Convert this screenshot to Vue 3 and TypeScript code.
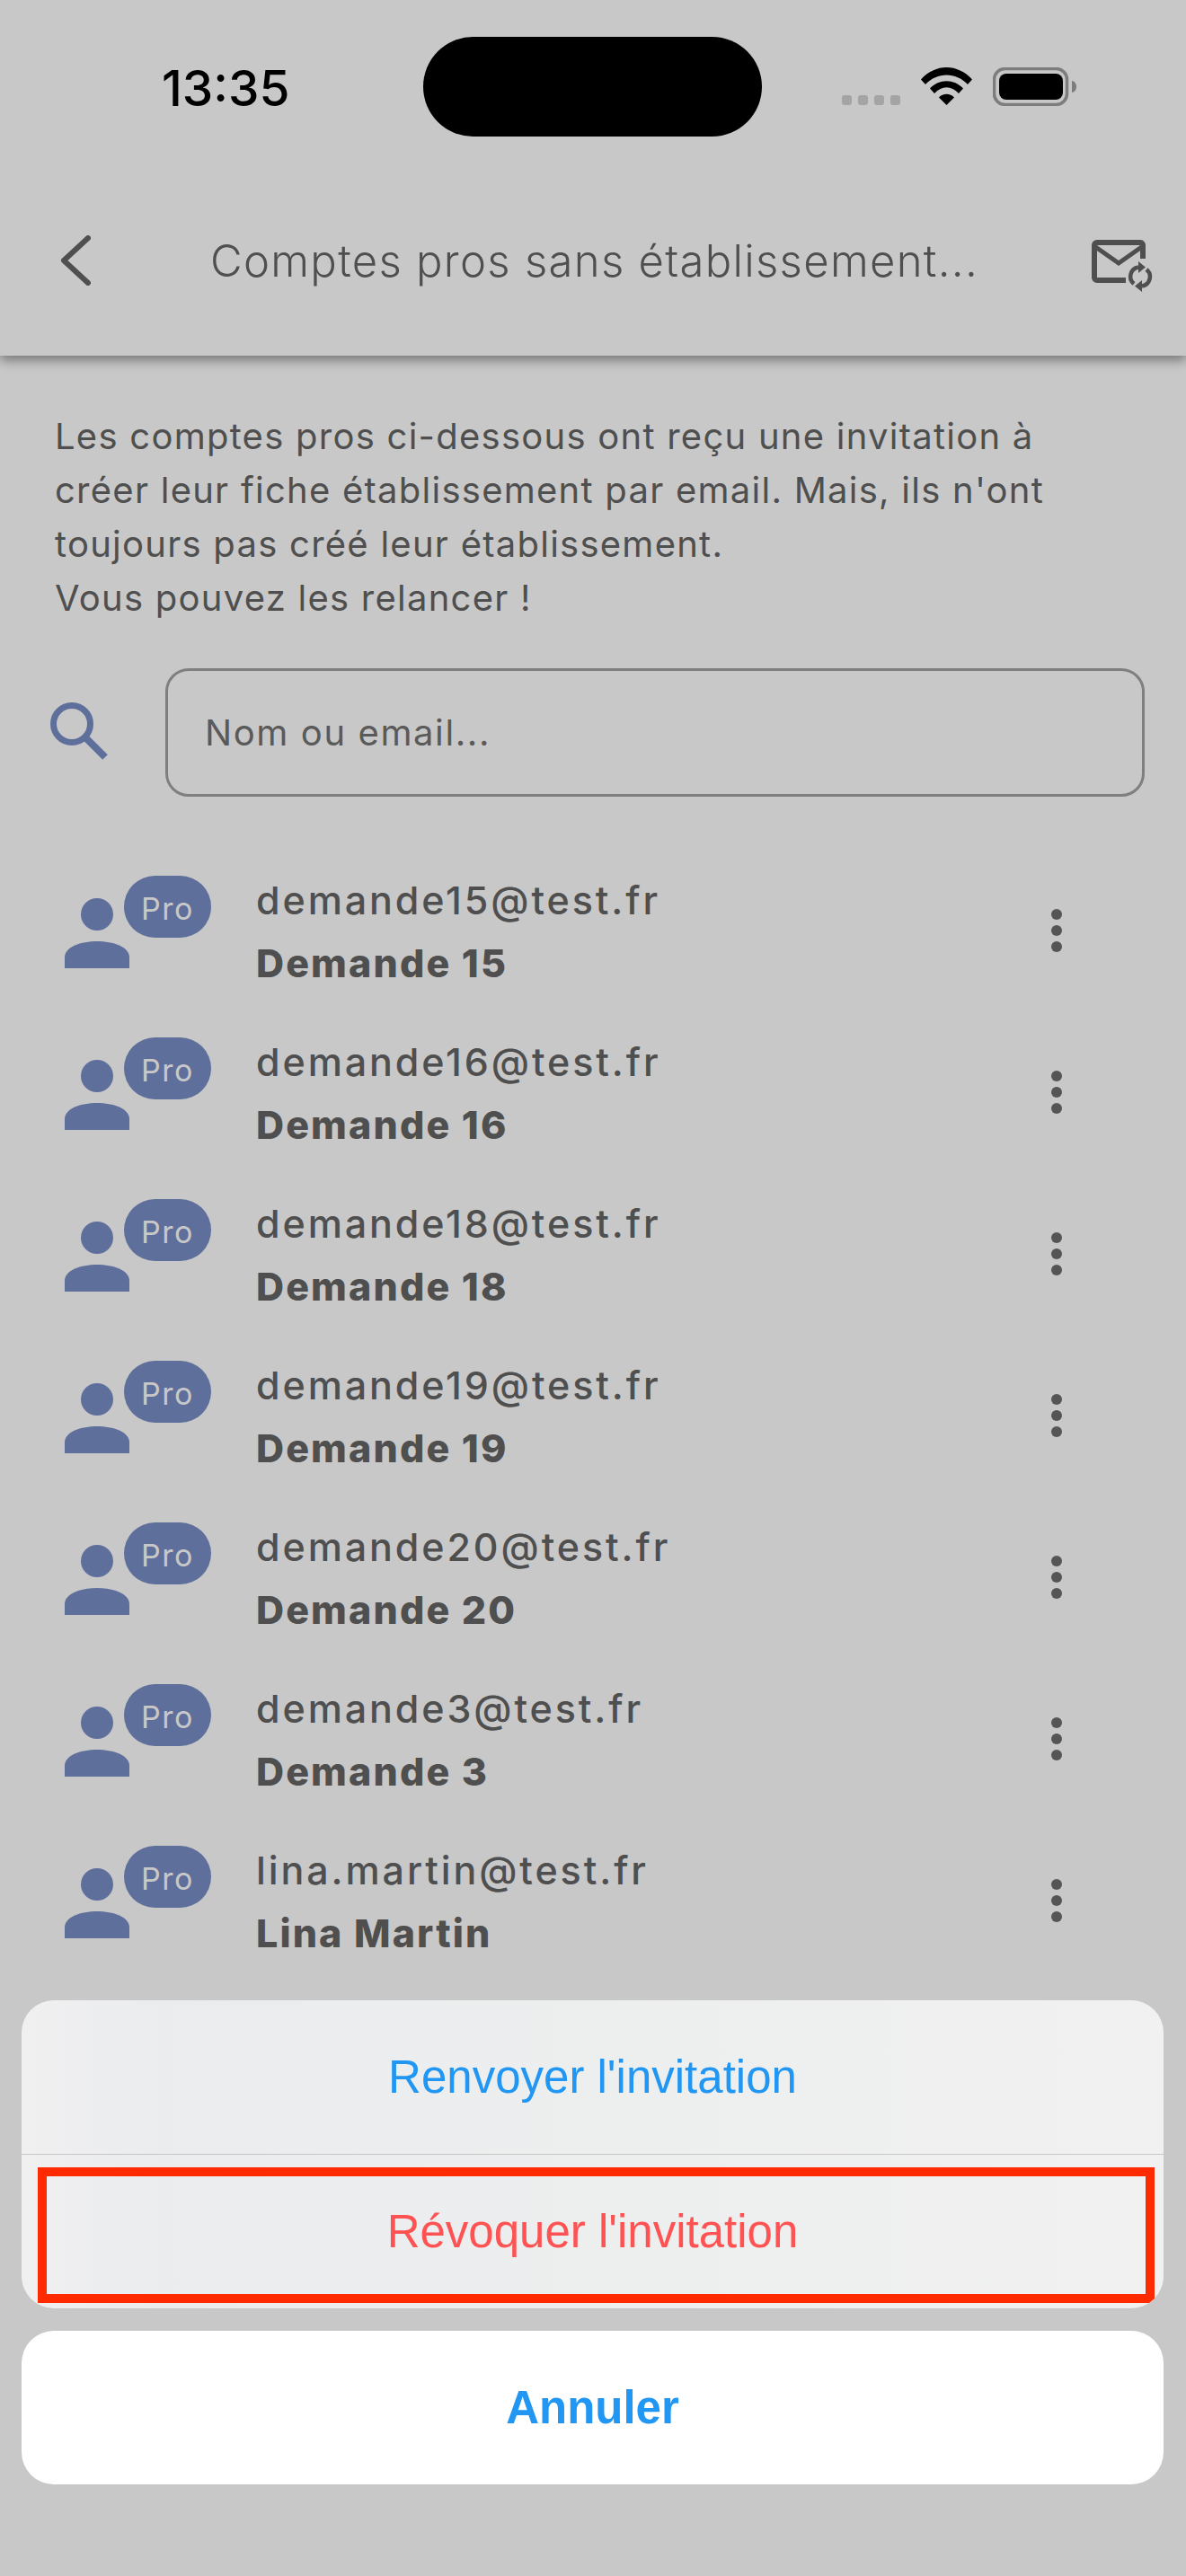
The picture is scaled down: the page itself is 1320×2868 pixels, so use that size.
<script setup lang="ts">
interface Row { email: string; name: string }
const rows: Row[] = [
  { email: 'demande15@test.fr', name: 'Demande 15' },
  { email: 'demande16@test.fr', name: 'Demande 16' },
  { email: 'demande18@test.fr', name: 'Demande 18' },
  { email: 'demande19@test.fr', name: 'Demande 19' },
  { email: 'demande20@test.fr', name: 'Demande 20' },
  { email: 'demande3@test.fr', name: 'Demande 3' },
  { email: 'lina.martin@test.fr', name: 'Lina Martin' },
]
</script>

<template>
  <div class="screen">
    <header class="top">
      <div class="status">
        <div class="time">13:35</div>
        <div class="island"></div>
        <div class="indicators">
          <div class="signal"><i></i><i></i><i></i><i></i></div>
          <svg class="wifi" width="57" height="42" viewBox="0 0 57 42">
            <path d="M0 13.5C16-4.5 41-4.500 57 13.500L52 19C39 5 18 5 5 19Z" fill="#000"/>
            <path d="M10 23.500C20 12.500 37 12.500 47 23.500L42 29C33.500 20 23.500 20 15 29Z" fill="#000"/>
            <path d="M20 33.500C24.500 28.500 32.500 28.500 37 33.500L28.500 42Z" fill="#000"/>
          </svg>
          <svg class="battery" width="93" height="43" viewBox="0 0 93 43">
            <rect x="1.500" y="1.500" width="81" height="40" rx="12" fill="none" stroke="#7d7d7d" stroke-width="3.500"/>
            <rect x="7" y="7" width="71" height="29" rx="8" fill="#000"/>
            <path d="M88 15c3 .5 5 3 5 6.500s-2 6-5 6.500Z" fill="#7d7d7d"/>
          </svg>
        </div>
      </div>
      <div class="bar">
        <svg class="back" width="34" height="56" viewBox="0 0 34 56">
          <path d="M31 3 4 28l27 25" fill="none" stroke="#4f4f4f" stroke-width="6" stroke-linecap="round" stroke-linejoin="round"/>
        </svg>
        <h1 class="title">Comptes pros sans établissement...</h1>
        <svg class="mail" width="68" height="58" viewBox="0 0 68 58">
          <path d="M38 45H6a3 3 0 0 1-3-3V6a3 3 0 0 1 3-3h48a3 3 0 0 1 3 3v15" fill="none" stroke="#4f4f4f" stroke-width="6" stroke-linejoin="round"/>
          <path d="M3 7l27 19L57 7" fill="none" stroke="#4f4f4f" stroke-width="5"/>
          <g fill="none" stroke="#4f4f4f" stroke-width="4.500">
            <path d="M47 49a10.500 10.500 0 0 1 5-18.500"/>
            <path d="M61 33a10.500 10.500 0 0 1-5 18.500"/>
          </g>
          <path d="M52 24v13l8-6.500ZM56 45v13l-8-6.500Z" fill="#4f4f4f"/>
        </svg>
      </div>
    </header>

    <p class="intro">
      Les comptes pros ci-dessous ont reçu une invitation à<br />
      créer leur fiche établissement par email. Mais, ils n'ont<br />
      toujours pas créé leur établissement.<br />
      Vous pouvez les relancer !
    </p>

    <div class="search">
      <svg class="lens" width="65" height="65" viewBox="0 0 65 65">
        <circle cx="24" cy="24" r="20.500" fill="none" stroke="#5e6f9b" stroke-width="7"/>
        <path d="M40 40 61 61" fill="none" stroke="#5e6f9b" stroke-width="8"/>
      </svg>
      <div class="field">Nom ou email...</div>
    </div>

    <ul class="list">
      <li v-for="row in rows" :key="row.email" class="row">
        <div class="avatar">
          <svg width="72" height="78" viewBox="0 0 72 78">
            <circle cx="36" cy="18" r="18" fill="#5e6f9b"/>
            <path d="M0 66c0-12 18-18 36-18s36 6 36 18v12H0Z" fill="#5e6f9b"/>
          </svg>
          <span class="pro">Pro</span>
        </div>
        <div class="who">
          <div class="email">{{ row.email }}</div>
          <div class="name">{{ row.name }}</div>
        </div>
        <div class="more"><i></i><i></i><i></i></div>
      </li>
    </ul>

    <div class="sheet">
      <div class="group">
        <div class="action blue">Renvoyer l'invitation</div>
        <div class="action red">
          Révoquer l'invitation
          <span class="marker"></span>
        </div>
      </div>
      <div class="cancel">Annuler</div>
    </div>
  </div>
</template>

<style scoped>
.screen {
  position: relative;
  width: 1320px;
  height: 2868px;
  overflow: hidden;
  background: #c8c8c8;
  color: #4f4f4f;
  font-family: Inter, sans-serif;
}
.top {
  height: 396px;
  box-sizing: border-box;
  padding-top: 41px;
  box-shadow: 0 5px 12px rgba(0, 0, 0, 0.42);
}
.status {
  display: flex;
  height: 111px;
}
.time {
  width: 471px;
  box-sizing: border-box;
  padding-left: 180px;
  padding-top: 27px;
  font-weight: 500;
  font-size: 55px;
  line-height: 60px;
  color: #000;
}
.island {
  width: 377px;
  height: 111px;
  border-radius: 56px;
  background: #000;
}
.indicators {
  display: flex;
  align-items: flex-end;
  gap: 23px;
  margin: 34px 0 0 89px;
  height: 43px;
}
.signal {
  display: flex;
  gap: 7px;
  margin-bottom: 1px;
}
.signal i {
  width: 11px;
  height: 11px;
  border-radius: 3px;
  background: #a4a4a4;
}
.wifi, .battery { display: block; }
.wifi { margin-bottom: 1px; }
.bar {
  display: flex;
  align-items: center;
  height: 76px;
  margin-top: 100px;
  padding-left: 67px;
}
.title {
  margin: 0 0 0 133px;
  width: 981px;
  font-weight: 300;
  font-size: 49px;
  letter-spacing: 1.3px;
  white-space: nowrap;
  color: #4f4f4f;
}
.mail { margin-top: 12px; }
.intro {
  margin: 60px 0 0 61px;
  font-size: 40px;
  line-height: 60px;
  letter-spacing: 1.25px;
}
.search {
  display: flex;
  align-items: center;
  margin-top: 48px;
  padding: 0 46px 0 56px;
  gap: 63px;
}
.lens { flex: none; margin-top: -3px; }
.field {
  flex: 1;
  height: 143px;
  box-sizing: border-box;
  border: 3px solid #7f7f7f;
  border-radius: 26px;
  padding-left: 41px;
  font-size: 40px;
  line-height: 137px;
  letter-spacing: 1.6px;
  color: #5a5a5a;
}
.list {
  list-style: none;
  margin: 88px 0 0;
  padding: 0;
}
.row {
  display: flex;
  height: 180px;
  padding-left: 72px;
}
.avatar {
  position: relative;
  width: 213px;
  flex: none;
  padding-top: 25px;
  box-sizing: border-box;
}
.avatar svg { display: block; }
.pro {
  position: absolute;
  left: 66px;
  top: 0;
  width: 97px;
  height: 69px;
  border-radius: 35px;
  background: #5e6f9b;
  color: #c8c8c8;
  font-size: 34px;
  line-height: 73px;
  text-align: center;
  letter-spacing: 1.5px;
}
.who {
  flex: 1;
}
.email {
  font-size: 43px;
  font-weight: 500;
  line-height: 54px;
  letter-spacing: 2.9px;
  white-space: nowrap;
}
.name {
  margin-top: 16px;
  font-size: 43px;
  font-weight: 800;
  line-height: 54px;
  letter-spacing: 2.1px;
}
.more {
  display: flex;
  flex-direction: column;
  gap: 6px;
  padding: 37px 138px 0 0;
}
.more i {
  width: 12px;
  height: 12px;
  border-radius: 50%;
  background: #555;
}
.sheet {
  position: absolute;
  left: 24px;
  top: 2227px;
  width: 1271px;
  font-family: "Liberation Sans", Arial, sans-serif;
  font-size: 51px;
  text-align: center;
}
.group {
  height: 343px;
  border-radius: 36px;
  overflow: hidden;
  background: linear-gradient(90deg, #f0f0f1 0, #ebecee 12%, #edeeee 50%, #f1f1f1 100%);
}
.action {
  position: relative;
  height: 171px;
  line-height: 171px;
}
.action.blue {
  color: #2196f3;
  border-bottom: 1px solid #c6c6c6;
}
.action.red { color: #ff5252; }
.marker {
  position: absolute;
  left: 18px;
  right: 10px;
  top: 14px;
  bottom: 6px;
  border: 10px solid #ff2a00;
}
.cancel {
  margin-top: 25px;
  height: 171px;
  line-height: 171px;
  border-radius: 36px;
  background: #fff;
  color: #2196f3;
  font-weight: 700;
}
</style>

<style>
html, body { margin: 0; background: #c8c8c8; }
</style>
